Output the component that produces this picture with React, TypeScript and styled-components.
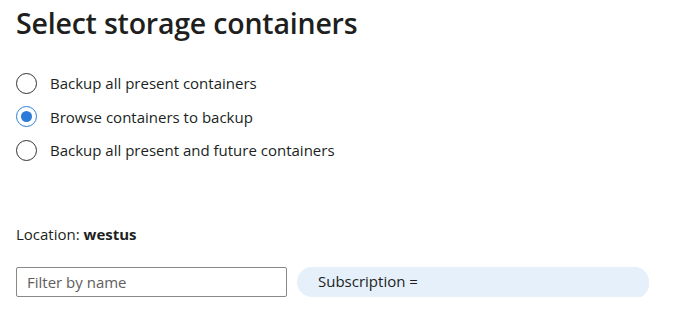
import React, { useState } from "react";
import styled, { createGlobalStyle } from "styled-components";

const Global = createGlobalStyle`
  html, body { margin: 0; padding: 0; background: #ffffff; }
  body { font-family: "Open Sans", "Noto Sans", sans-serif; color: #201f1e; }
  * { box-sizing: border-box; }
`;

const Page = styled.div`
  padding: 3px 16px 0 16px;
  display: flex;
  flex-direction: column;
`;

const Title = styled.h1`
  margin: 0;
  font-size: 28.5px;
  font-weight: 600;
  line-height: 40px;
  color: #201f1e;
  letter-spacing: -0.2px;
`;

const RadioGroup = styled.div`
  display: flex;
  flex-direction: column;
  gap: 13.5px;
  margin-top: 30px;
`;

const Option = styled.label`
  display: flex;
  align-items: center;
  gap: 13px;
  height: 20px;
  font-size: 15px;
  cursor: pointer;
  color: #201f1e;
`;

const Circle = styled.span<{ $checked: boolean }>`
  width: 21px;
  height: 21px;
  border-radius: 50%;
  border: 1px solid ${(p) => (p.$checked ? "#2b7fdc" : "#323130")};
  display: flex;
  align-items: center;
  justify-content: center;
  flex: none;
  &::after {
    content: "";
    width: 11px;
    height: 11px;
    border-radius: 50%;
    background: #2b7bd8;
    display: ${(p) => (p.$checked ? "block" : "none")};
  }
`;

const Location = styled.div`
  margin-top: 64px;
  font-size: 15px;
  line-height: 20px;
  b { font-weight: 700; }
`;

const FilterRow = styled.div`
  display: flex;
  align-items: flex-start;
  gap: 10px;
  margin-top: 23px;
`;

const Input = styled.input`
  width: 271px;
  height: 30px;
  border: 1px solid #8a8886;
  border-radius: 2px;
  padding: 0 10px;
  font-family: inherit;
  font-size: 15px;
  color: #201f1e;
  outline: none;
  &::placeholder { color: #605e5c; }
`;

const Pill = styled.div`
  display: flex;
  align-items: flex-start;
  height: 30px;
  background: #e6f0fa;
  border-radius: 15px;
  padding-left: 21px;
`;

const PillLabel = styled.span`
  font-size: 15px;
  line-height: 29px;
  color: #201f1e;
  white-space: pre;
`;

const PillValue = styled.div`
  width: 227px;
  height: 32px;
  background: #e6f0fa;
  border-radius: 0 15px 15px 0;
  margin-left: 4px;
`;

const options = [
  "Backup all present containers",
  "Browse containers to backup",
  "Backup all present and future containers",
];

export default function App() {
  const [sel, setSel] = useState(1);
  return (
    <Page>
      <Global />
      <Title>Select storage containers</Title>
      <RadioGroup>
        {options.map((o, i) => (
          <Option key={o} onClick={() => setSel(i)}>
            <Circle $checked={sel === i} />
            {o}
          </Option>
        ))}
      </RadioGroup>
      <Location>
        Location: <b>westus</b>
      </Location>
      <FilterRow>
        <Input placeholder="Filter by name" />
        <Pill>
          <PillLabel>Subscription =</PillLabel>
          <PillValue />
        </Pill>
      </FilterRow>
    </Page>
  );
}
